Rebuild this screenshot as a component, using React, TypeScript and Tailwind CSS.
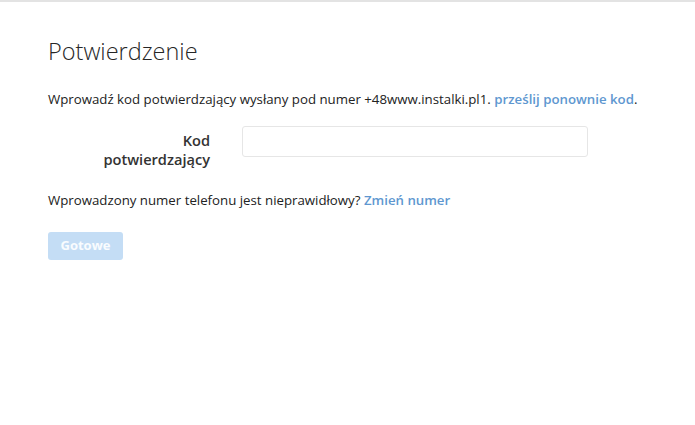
import React, { useState } from "react";

const App: React.FC = () => {
    const [code, setCode] = useState("");

    return (
        <div className="min-h-[425px] bg-white border-t-2 border-[#e3e3e3] font-['Open_Sans',sans-serif] text-[#222]">
            <div className="pl-12 pt-[34px]">
                <h1 className="text-[23.5px] font-light leading-[30px] text-[#262626]">
                    Potwierdzenie
                </h1>
                <p className="mt-[24px] text-[13.25px] leading-[18px]">
                    Wprowadź kod potwierdzający wysłany pod numer +48www.instalki.pl1.{" "}
                    <a href="#" className="font-semibold text-[#5e97d0]">
                        prześlij ponownie kod
                    </a>
                    .
                </p>

                <div className="mt-[18px] flex items-start">
                    <label
                        htmlFor="code"
                        className="w-[162px] pt-[5px] text-right text-[14.6px] font-semibold leading-[19px] text-[#333]"
                    >
                        Kod
                        <br />
                        potwierdzający
                    </label>
                    <input
                        id="code"
                        type="text"
                        value={code}
                        onChange={(e) => setCode(e.target.value)}
                        className="ml-[32px] h-[31px] w-[346px] rounded-[3px] border border-[#e6e6e6] px-2 text-[13px] outline-none"
                    />
                </div>

                <p className="mt-[22px] text-[13.25px] leading-[18px]">
                    Wprowadzony numer telefonu jest nieprawidłowy?{" "}
                    <a href="#" className="font-semibold text-[#5e97d0]">
                        Zmień numer
                    </a>
                </p>

                <button
                    type="button"
                    disabled
                    className="mt-[23px] h-[28px] w-[75px] rounded-[3px] bg-[#c4ddf5] text-[13px] font-bold text-white/90"
                >
                    Gotowe
                </button>
            </div>
        </div>
    );
};

export default App;
